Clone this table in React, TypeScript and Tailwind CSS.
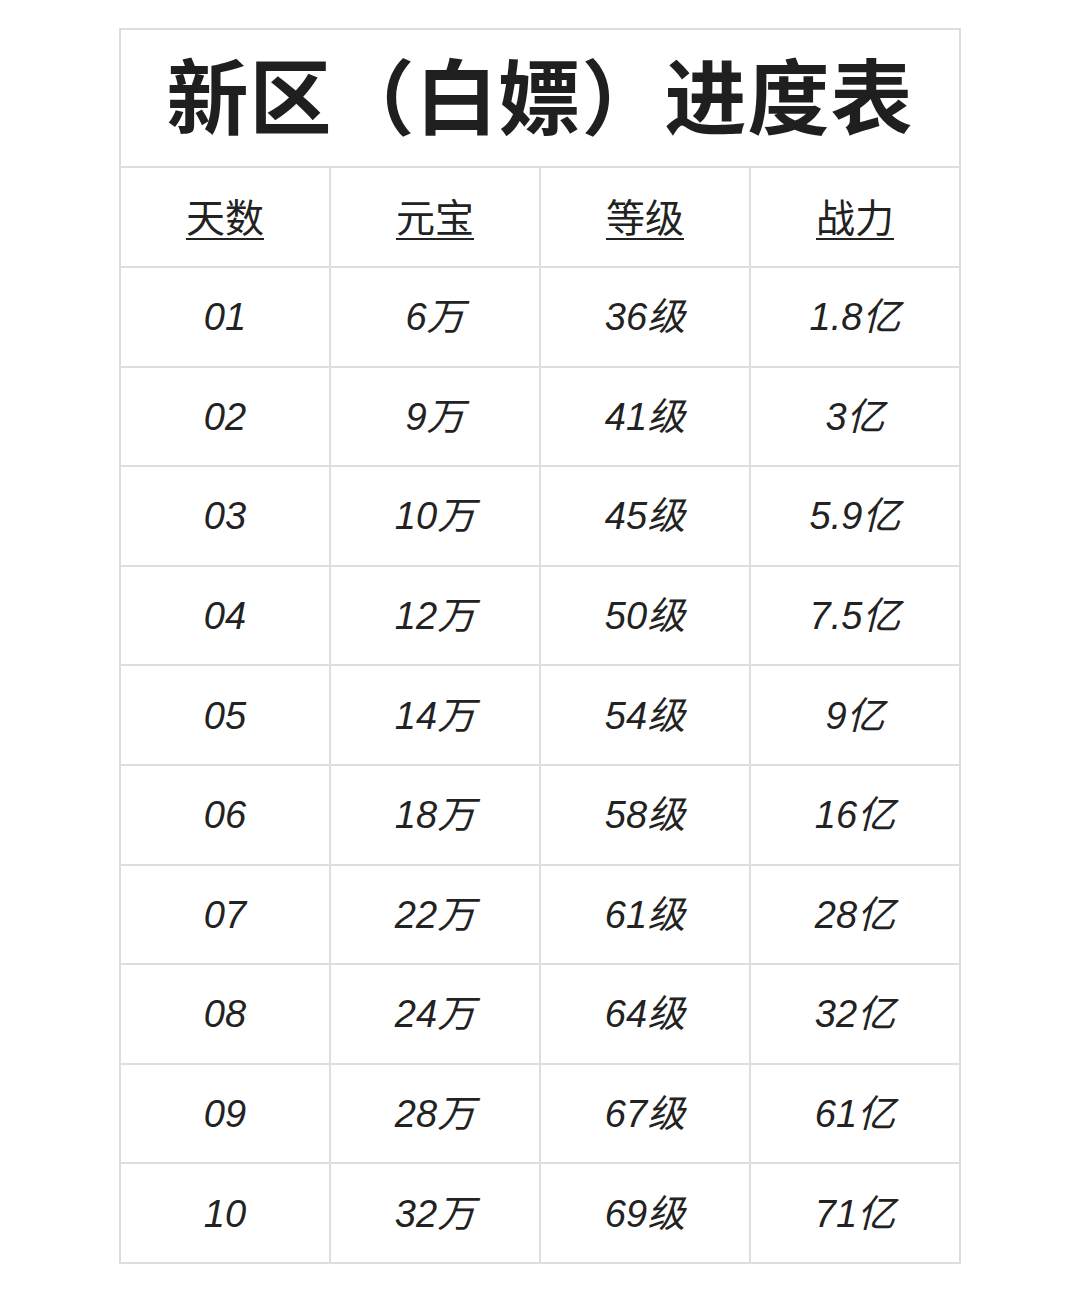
const rows = [
  ["01", "6万", "36级", "1.8亿"],
  ["02", "9万", "41级", "3亿"],
  ["03", "10万", "45级", "5.9亿"],
  ["04", "12万", "50级", "7.5亿"],
  ["05", "14万", "54级", "9亿"],
  ["06", "18万", "58级", "16亿"],
  ["07", "22万", "61级", "28亿"],
  ["08", "24万", "64级", "32亿"],
  ["09", "28万", "67级", "61亿"],
  ["10", "32万", "69级", "71亿"],
];

const heads = ["天数", "元宝", "等级", "战力"];

export default function App() {
  return (
    <div className="w-[1080px] h-[1307px] bg-white pt-[28px] pl-[119px] font-['Noto_Sans_CJK_SC','Noto_Sans',sans-serif] text-[#222]">
      <table className="border-collapse w-[842px] table-fixed">
        <thead>
          <tr className="h-[138px]">
            <th colSpan={4} className="border-2 border-[#dedede] pb-[10px] text-[82px] font-semibold leading-none tracking-[1px] text-[#1f1f1f]">
              新区（白嫖）进度表
            </th>
          </tr>
          <tr className="h-[100px]">
            {heads.map((h) => (
              <th key={h} className="border-2 border-[#dedede] pb-[4px] font-normal text-[39px] leading-none">
                <span className="underline decoration-2 underline-offset-[6px]">{h}</span>
              </th>
            ))}
          </tr>
        </thead>
        <tbody>
          {rows.map((r) => (
            <tr key={r[0]} className="h-[99.6px]">
              {r.map((c, i) => (
                <td key={i} className="border-2 border-[#dedede] pt-[1px] text-center italic text-[38px] leading-none font-['Liberation_Sans','Noto_Sans_CJK_SC',sans-serif]">
                  {c}
                </td>
              ))}
            </tr>
          ))}
        </tbody>
      </table>
    </div>
  );
}
